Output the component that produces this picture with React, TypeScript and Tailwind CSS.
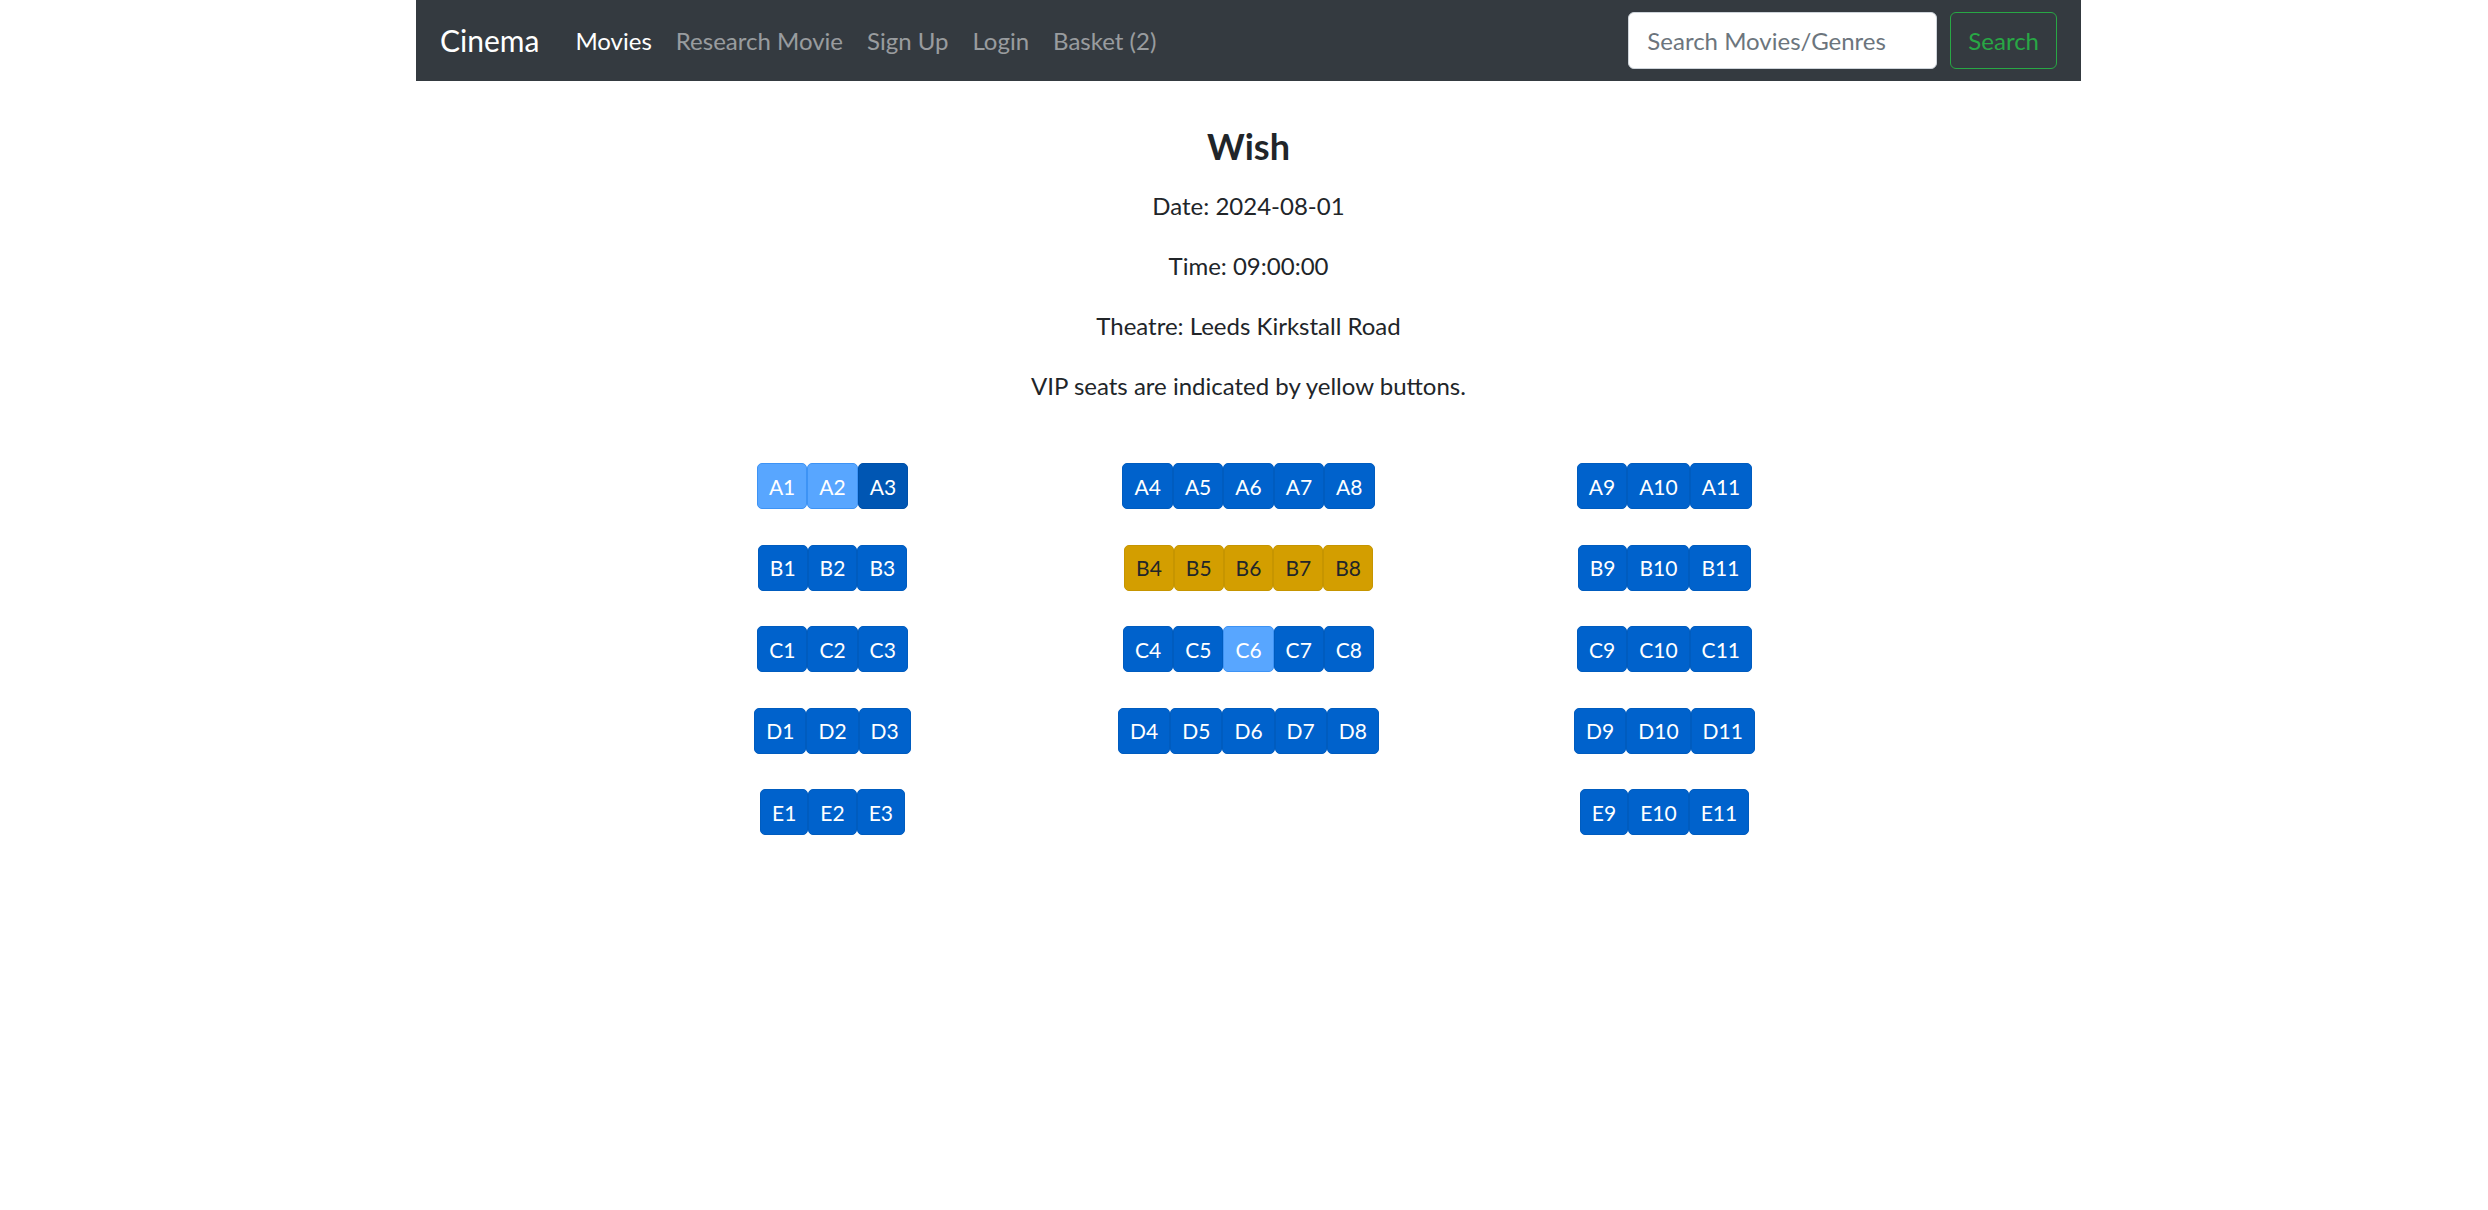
import React, { useState } from 'react';

type SeatState = 'normal' | 'selected' | 'active' | 'vip';

const seatRows: string[][][] = [
  [['A1', 'A2', 'A3'], ['A4', 'A5', 'A6', 'A7', 'A8'], ['A9', 'A10', 'A11']],
  [['B1', 'B2', 'B3'], ['B4', 'B5', 'B6', 'B7', 'B8'], ['B9', 'B10', 'B11']],
  [['C1', 'C2', 'C3'], ['C4', 'C5', 'C6', 'C7', 'C8'], ['C9', 'C10', 'C11']],
  [['D1', 'D2', 'D3'], ['D4', 'D5', 'D6', 'D7', 'D8'], ['D9', 'D10', 'D11']],
  [['E1', 'E2', 'E3'], [], ['E9', 'E10', 'E11']],
];

const vipSeats = ['B4', 'B5', 'B6', 'B7', 'B8'];

export default function App() {
  const [selected, setSelected] = useState<string[]>(['A1', 'A2', 'C6']);
  const [focused, setFocused] = useState<string>('A3');

  const toggleSeat = (seat: string) => {
    setFocused(seat);
    setSelected((prev) => (prev.includes(seat) ? prev.filter((s) => s !== seat) : [...prev, seat]));
  };

  const getState = (seat: string): SeatState => {
    if (selected.includes(seat)) return 'selected';
    if (vipSeats.includes(seat)) return 'vip';
    if (seat === focused) return 'active';
    return 'normal';
  };

  return (
    <div className="min-h-screen bg-white text-[#212529]" style={{ fontFamily: 'Lato, "Noto Sans", sans-serif' }}>
      <div className="ml-[416px] w-[1665px]">
        {/* Navbar */}
        <nav className="flex h-[81px] items-center bg-[#343a40] px-[24px]">
          <a href="#" className="mr-[24px] text-[30px] leading-[45px] text-white">
            Cinema
          </a>
          <ul className="flex items-center text-[24px] leading-[36px]">
            <li><a href="#" className="block px-[12px] text-white">Movies</a></li>
            <li><a href="#" className="block px-[12px] text-white/50">Research Movie</a></li>
            <li><a href="#" className="block px-[12px] text-white/50">Sign Up</a></li>
            <li><a href="#" className="block px-[12px] text-white/50">Login</a></li>
            <li><a href="#" className="block px-[12px] text-white/50">Basket ({selected.length - 1})</a></li>
          </ul>
          <form className="ml-auto flex items-center" onSubmit={(e) => e.preventDefault()}>
            <input
              type="search"
              placeholder="Search Movies/Genres"
              className="mr-[13px] h-[57px] w-[309px] rounded-[6px] border border-[#ced4da] bg-white px-[18px] text-[24px] text-[#495057] placeholder:text-[#6c757d] outline-none"
            />
            <button className="h-[57px] rounded-[6px] border-[1.5px] border-[#28a745] px-[17px] text-[24px] text-[#28a745]">
              Search
            </button>
          </form>
        </nav>

        {/* Showing info */}
        <div className="pt-[44px] text-center">
          <h4 className="mb-[20px] text-[36px] font-bold leading-[43px]">Wish</h4>
          <p className="mb-[24px] text-[24px] leading-[36px]">Date: 2024-08-01</p>
          <p className="mb-[24px] text-[24px] leading-[36px]">Time: 09:00:00</p>
          <p className="mb-[24px] text-[24px] leading-[36px]">Theatre: Leeds Kirkstall Road</p>
          <p className="text-[24px] leading-[36px]">VIP seats are indicated by yellow buttons.</p>
        </div>

        {/* Seat map */}
        <div className="mx-auto mt-[59px] flex w-[1248px] flex-col gap-[35.5px]">
          {seatRows.map((row, i) => (
            <div key={i} className="grid h-[46px] grid-cols-3">
              {row.map((block, j) => (
                <div key={j} className="flex justify-center">
                  {block.map((seat) => (
                    <SeatButton key={seat} seat={seat} state={getState(seat)} onClick={() => toggleSeat(seat)} />
                  ))}
                </div>
              ))}
            </div>
          ))}
        </div>
      </div>
    </div>
  );
}

function SeatButton({ seat, state, onClick }: { seat: string; state: SeatState; onClick: () => void }) {
  const styles: Record<SeatState, string> = {
    normal: 'bg-[#0062cc] border-[#005cbf] text-white',
    active: 'bg-[#0056b3] border-[#0050a8] text-white',
    selected: 'bg-[#58a6ff] border-[#3d93f5] text-white',
    vip: 'bg-[#d39e00] border-[#c69500] text-[#212529]',
  };

  return (
    <button
      onClick={onClick}
      className={`h-[46px] rounded-[5px] border px-[11px] text-[21px] leading-[31px] ${styles[state]}`}
    >
      {seat}
    </button>
  );
}
